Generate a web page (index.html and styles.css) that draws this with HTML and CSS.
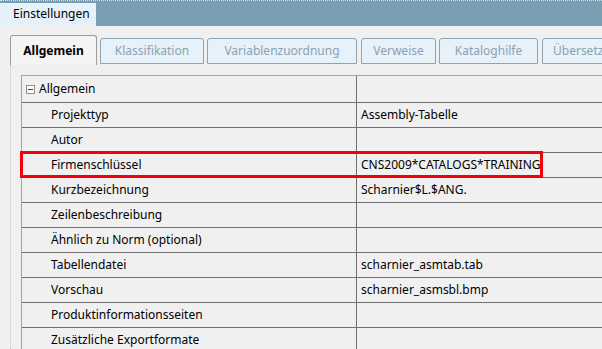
FILE: index.html
```html
<!DOCTYPE html>
<html lang="de">
<head>
<meta charset="utf-8">
<title>Einstellungen</title>
<link rel="stylesheet" href="styles.css">
</head>
<body>
<div class="topbar">
  <div class="doctab">Einstellungen</div>
</div>
<div class="tabs">
  <div class="tab active w-allg">Allgemein</div>
  <div class="tab w-klass">Klassifikation</div>
  <div class="tab w-var">Variablenzuordnung</div>
  <div class="tab w-verw">Verweise</div>
  <div class="tab w-kat">Kataloghilfe</div>
  <div class="tab w-ueb">Übersetzungen</div>
</div>
<div class="panel">
  <div class="grid">
    <div class="row group">
      <div class="label"><span class="minus"></span>Allgemein</div>
      <div class="value"></div>
    </div>
    <div class="row"><div class="label">Projekttyp</div><div class="value">Assembly-Tabelle</div></div>
    <div class="row"><div class="label">Autor</div><div class="value"></div></div>
    <div class="row"><div class="label">Firmenschlüssel</div><div class="value">CNS2009*CATALOGS*TRAINING</div><div class="highlight"></div></div>
    <div class="row"><div class="label">Kurzbezeichnung</div><div class="value">Scharnier$L.$ANG.</div></div>
    <div class="row"><div class="label">Zeilenbeschreibung</div><div class="value"></div></div>
    <div class="row"><div class="label">Ähnlich zu Norm (optional)</div><div class="value"></div></div>
    <div class="row"><div class="label">Tabellendatei</div><div class="value">scharnier_asmtab.tab</div></div>
    <div class="row"><div class="label">Vorschau</div><div class="value">scharnier_asmsbl.bmp</div></div>
    <div class="row"><div class="label">Produktinformationsseiten</div><div class="value"></div></div>
    <div class="row"><div class="label">Zusätzliche Exportformate</div><div class="value"></div></div>
  </div>
</div>
</body>
</html>
```
FILE: styles.css
```css
html, body {
  margin: 0;
  padding: 0;
}
body {
  width: 602px;
  height: 349px;
  overflow: hidden;
  background: #f0f0f0;
  font-family: "Noto Sans", "Open Sans", sans-serif;
  font-size: 12px;
  color: #000;
}
.topbar {
  height: 25px;
  background: #7b9db2;
  border-top: 1px dotted #d4e2eb;
  display: flex;
  align-items: flex-end;
}
.doctab {
  width: 96px;
  height: 23px;
  background: #e6f0f8;
  box-sizing: border-box;
  padding-left: 13px;
  line-height: 22px;
  font-size: 12px;
}
.tabs {
  display: flex;
  align-items: flex-end;
  margin-left: 10px;
  padding-top: 9px;
  height: 30px;
  overflow: hidden;
  white-space: nowrap;
}
.tab {
  box-sizing: border-box;
  flex: none;
  height: 26px;
  margin-bottom: 1px;
  border: 1px solid #8fa4b3;
  border-radius: 3px 3px 0 0;
  background: #e6f1f9;
  color: #8ca1b4;
  text-align: center;
  line-height: 24px;
}
.tab.active {
  height: 30px;
  margin-bottom: 0;
  border-color: #9c9c9c;
  border-bottom: none;
  background: #f4f4f4;
  color: #000;
  font-weight: bold;
  line-height: 30px;
}
.w-allg { width: 87px; margin-right: 3px; }
.w-klass { width: 104px; margin-right: 3px; }
.w-var { width: 150px; margin-right: 4px; }
.w-verw { width: 75px; margin-right: 3px; }
.w-kat { width: 99px; margin-right: 4px; }
.w-ueb { width: 110px; text-align: left; padding-left: 10px; }
.panel {
  margin-left: 10px;
  border-left: 1px dotted #c4c4c4;
  padding-left: 10px;
  padding-top: 10px;
  height: 284px;
}
.grid {
  border-top: 1px solid #a3a3a3;
  border-left: 1px solid #a3a3a3;
}
.row {
  position: relative;
  display: grid;
  grid-template-columns: 334px 1fr;
  height: 25px;
  box-sizing: border-box;
  border-bottom: 1px solid #707070;
  line-height: 24px;
}
.row.group {
  height: 27px;
  line-height: 26px;
}
.label {
  padding-left: 29px;
  white-space: nowrap;
}
.group .label {
  padding-left: 4px;
  display: flex;
  align-items: center;
}
.value {
  border-left: 1px solid #707070;
  padding-left: 4px;
  white-space: nowrap;
}
.minus {
  position: relative;
  box-sizing: border-box;
  width: 9px;
  height: 9px;
  border: 1px solid #909090;
  background: #fbfbfb;
  margin-right: 4px;
}
.minus::after {
  content: "";
  position: absolute;
  left: 1px;
  top: 3px;
  width: 5px;
  height: 1px;
  background: #404040;
}
.highlight {
  position: absolute;
  left: -2px;
  top: -2px;
  width: 523px;
  height: 27px;
  box-sizing: border-box;
  border: 3px solid #f2000d;
  pointer-events: none;
}
```
